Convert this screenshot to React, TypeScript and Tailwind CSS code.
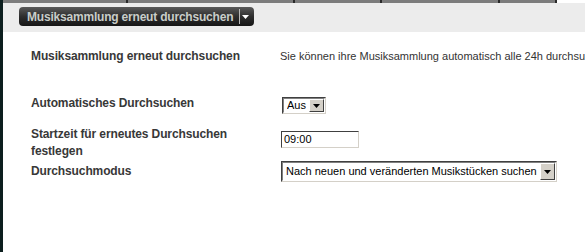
const TAB_STOPS = [125, 167, 87, 118, 57];

function Arrow({ className = "" }: { className?: string }) {
  return (
    <svg width="7" height="4" viewBox="0 0 7 4" className={className} aria-hidden="true">
      <path d="M0 0h7L3.5 4z" fill="currentColor" />
    </svg>
  );
}

function ClassicSelect({ value, width, height }: { value: string; width: number; height: number }) {
  return (
    <div
      className="flex border border-t-[#404040] border-l-[#404040] border-r-[#d4d0c8] border-b-[#d4d0c8] bg-white"
      style={{ width, height }}
    >
      <div className="flex min-w-0 flex-1 items-center border border-t-[#808080] border-l-[#808080] border-r-white border-b-white pl-[3px] text-[11px] text-black">
        <span className="truncate">{value}</span>
        <div className="ml-auto flex h-full w-[15px] shrink-0 items-center justify-center border border-t-white border-l-white border-r-[#404040] border-b-[#404040] bg-[#d4d0c8] text-black">
          <Arrow />
        </div>
      </div>
    </div>
  );
}

export default function App() {
  return (
    <div
      className="flex h-[252px] w-[585px] overflow-hidden bg-white text-[#383838]"
      style={{ fontFamily: '"Liberation Sans", Arial, sans-serif' }}
    >
      {/* dark frame edge */}
      <div className="w-[3px] shrink-0 bg-[#0c1e1e]" />

      <div className="flex min-w-0 flex-1 flex-col">
        {/* tab strip remnant */}
        <div className="flex h-[3px] shrink-0">
          {TAB_STOPS.map((w, i) => (
            <div key={i} className="h-full border-r-2 border-[#2a2a2a] bg-[#7c7c7c]" style={{ width: w }} />
          ))}
          <div className="flex-1 bg-white" />
        </div>

        {/* header band */}
        <div className="h-[29px] shrink-0 bg-[#ececec] pl-[16px] pt-[4px]">
          <button className="flex h-[19px] items-center rounded-[4px] bg-gradient-to-b from-[#5a5a5a] via-[#2e2e2e] to-[#161616] pl-[8px] pr-[5px] text-[12px] font-bold tracking-[-0.2px] text-[#c9cdc9]">
            Musiksammlung erneut durchsuchen
            <span className="ml-[6px] h-[15px] w-px bg-[#b8b8b8]" />
            <Arrow className="ml-[2px] text-white" />
          </button>
        </div>

        {/* settings form */}
        <div className="flex flex-1 flex-col pl-[28px] text-[12px] leading-[17px]">
          <div className="mt-[16px] flex">
            <div className="w-[249px] shrink-0 font-bold tracking-[-0.12px]">Musiksammlung erneut durchsuchen</div>
            <div className="whitespace-nowrap text-[11px] text-[#333]">
              Sie können ihre Musiksammlung automatisch alle 24h durchsuchen lassen.
            </div>
          </div>

          <div className="mt-[30px] flex items-start">
            <div className="w-[251px] shrink-0 font-bold tracking-[-0.12px]">Automatisches Durchsuchen</div>
            <div className="mt-[2px]">
              <ClassicSelect value="Aus" width={44} height={17} />
            </div>
          </div>

          <div className="mt-[12px] flex items-start">
            <div className="w-[250px] shrink-0 font-bold tracking-[-0.12px]">
              Startzeit für erneutes Durchsuchen
              <br />
              festlegen
            </div>
            <div className="mt-[5px] flex h-[17px] w-[78px] items-center border border-t-[#404040] border-l-[#404040] border-r-[#d4d0c8] border-b-[#d4d0c8] bg-white pl-[2px] text-[11px] text-black">
              09:00
            </div>
          </div>

          <div className="mt-[1px] flex items-start">
            <div className="mt-[2px] w-[250px] shrink-0 font-bold tracking-[-0.12px]">Durchsuchmodus</div>
            <ClassicSelect value="Nach neuen und veränderten Musikstücken suchen" width={276} height={21} />
          </div>
        </div>
      </div>
    </div>
  );
}
